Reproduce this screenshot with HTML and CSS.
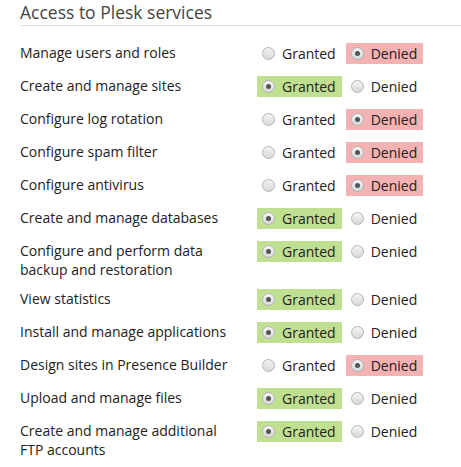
FILE: index.html
```html
<!DOCTYPE html>
<html lang="en">
<head>
  <meta charset="UTF-8">
  <title>Access to Plesk services</title>
  <link rel="stylesheet" href="styles.css">
</head>
<body>
  <div class="section">
    <h2 class="section-title">Access to Plesk services</h2>

    <div class="row">
      <div class="row-label">Manage users and roles</div>
      <div class="choices">
        <label class="choice"><input type="radio" name="r1"> Granted</label>
        <label class="choice denied"><input type="radio" name="r1" checked> Denied</label>
      </div>
    </div>
    <div class="row">
      <div class="row-label">Create and manage sites</div>
      <div class="choices">
        <label class="choice granted"><input type="radio" name="r2" checked> Granted</label>
        <label class="choice"><input type="radio" name="r2"> Denied</label>
      </div>
    </div>
    <div class="row">
      <div class="row-label">Configure log rotation</div>
      <div class="choices">
        <label class="choice"><input type="radio" name="r3"> Granted</label>
        <label class="choice denied"><input type="radio" name="r3" checked> Denied</label>
      </div>
    </div>
    <div class="row">
      <div class="row-label">Configure spam filter</div>
      <div class="choices">
        <label class="choice"><input type="radio" name="r4"> Granted</label>
        <label class="choice denied"><input type="radio" name="r4" checked> Denied</label>
      </div>
    </div>
    <div class="row">
      <div class="row-label">Configure antivirus</div>
      <div class="choices">
        <label class="choice"><input type="radio" name="r5"> Granted</label>
        <label class="choice denied"><input type="radio" name="r5" checked> Denied</label>
      </div>
    </div>
    <div class="row">
      <div class="row-label">Create and manage databases</div>
      <div class="choices">
        <label class="choice granted"><input type="radio" name="r6" checked> Granted</label>
        <label class="choice"><input type="radio" name="r6"> Denied</label>
      </div>
    </div>
    <div class="row">
      <div class="row-label">Configure and perform data backup and restoration</div>
      <div class="choices">
        <label class="choice granted"><input type="radio" name="r7" checked> Granted</label>
        <label class="choice"><input type="radio" name="r7"> Denied</label>
      </div>
    </div>
    <div class="row">
      <div class="row-label">View statistics</div>
      <div class="choices">
        <label class="choice granted"><input type="radio" name="r8" checked> Granted</label>
        <label class="choice"><input type="radio" name="r8"> Denied</label>
      </div>
    </div>
    <div class="row">
      <div class="row-label">Install and manage applications</div>
      <div class="choices">
        <label class="choice granted"><input type="radio" name="r9" checked> Granted</label>
        <label class="choice"><input type="radio" name="r9"> Denied</label>
      </div>
    </div>
    <div class="row">
      <div class="row-label">Design sites in Presence Builder</div>
      <div class="choices">
        <label class="choice"><input type="radio" name="r10"> Granted</label>
        <label class="choice denied"><input type="radio" name="r10" checked> Denied</label>
      </div>
    </div>
    <div class="row">
      <div class="row-label">Upload and manage files</div>
      <div class="choices">
        <label class="choice granted"><input type="radio" name="r11" checked> Granted</label>
        <label class="choice"><input type="radio" name="r11"> Denied</label>
      </div>
    </div>
    <div class="row">
      <div class="row-label">Create and manage additional FTP accounts</div>
      <div class="choices">
        <label class="choice granted"><input type="radio" name="r12" checked> Granted</label>
        <label class="choice"><input type="radio" name="r12"> Denied</label>
      </div>
    </div>
  </div>
</body>
</html>
```

FILE: styles.css
```css
body {
  font-family: 'Open Sans', 'DejaVu Sans', sans-serif;
  margin: 0;
  padding: 0;
  background-color: white;
  color: #222;
  font-size: 14px;
}
.section {
  padding-left: 20px;
}
.section-title {
  margin: 0 0 12px;
  padding-bottom: 1px;
  font-size: 17.5px;
  font-weight: normal;
  line-height: 24px;
  color: #444;
  border-bottom: 1px solid #ddd;
}
.row {
  display: flex;
  align-items: flex-start;
  min-height: 33px;
}
.row-label {
  width: 222px;
  padding: 5px 15px 5px 0;
  line-height: 19px;
}
.choices {
  display: flex;
  gap: 4px;
  margin-top: 5px;
}
.choice {
  display: inline-flex;
  align-items: center;
  height: 21px;
  padding: 0 6px 0 5px;
  line-height: 21px;
  gap: 7px;
}
.choice.granted {
  background-color: #c0e091;
}
.choice.denied {
  background-color: #f4b2b2;
}
.choice input {
  appearance: none;
  -webkit-appearance: none;
  margin: 0;
  width: 13px;
  height: 13px;
  border-radius: 50%;
  border: 1px solid #b4b4b4;
  background: linear-gradient(#f4f4f4, #d8d8d8);
  box-sizing: border-box;
  position: relative;
}
.choice input:checked::after {
  content: '';
  position: absolute;
  left: 3px;
  top: 3px;
  width: 5px;
  height: 5px;
  border-radius: 50%;
  background-color: #555;
}
```
